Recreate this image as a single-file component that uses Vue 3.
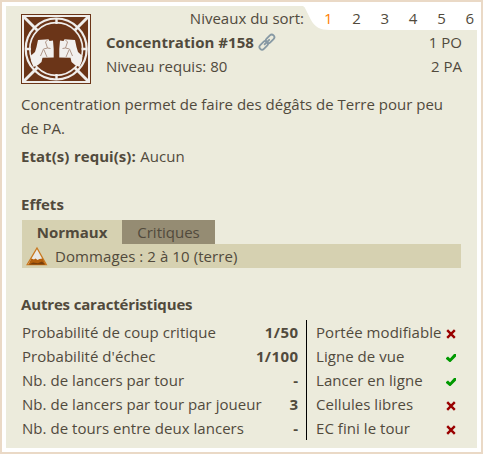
<script setup>
const levels = [1, 2, 3, 4, 5, 6]
const stats = [
  { label: 'Probabilité de coup critique', value: '1/50' },
  { label: "Probabilité d'échec", value: '1/100' },
  { label: 'Nb. de lancers par tour', value: '-' },
  { label: 'Nb. de lancers par tour par joueur', value: '3' },
  { label: 'Nb. de tours entre deux lancers', value: '-' },
]
const flags = [
  { label: 'Portée modifiable', on: false },
  { label: 'Ligne de vue', on: true },
  { label: 'Lancer en ligne', on: true },
  { label: 'Cellules libres', on: false },
  { label: 'EC fini le tour', on: false },
]
</script>

<template>
  <div class="card">
    <div class="panel">
      <header class="levels">
        <span class="levels-label">Niveaux du sort:</span>
        <nav class="level-list">
          <span v-for="n in levels" :key="n" class="level" :class="{ active: n === 1 }">{{ n }}</span>
        </nav>
      </header>

      <section class="head">
        <svg class="spell" width="70" height="70" viewBox="0 0 70 70">
          <rect width="70" height="70" fill="#6b3518" />
          <rect x="2" y="2" width="66" height="66" fill="none" stroke="#f0eeec" stroke-width="2" />
          <g fill="none" stroke="#f0eeec">
            <circle cx="35.200" cy="35" r="30.500" stroke-width="2.200" />
            <circle cx="35.200" cy="35" r="26.400" stroke-width="1.600" />
            <path d="M3 3L16.500 16.500M67 3L53.500 16.500M3 67L16.500 53.500M67 67L53.500 53.500" stroke-width="2.900" />
            <path d="M35.500 4V10M35.500 60V66M4 35H10M60.500 35H66" stroke-width="2.400" />
          </g>
          <g fill="#f2f0ee">
            <path d="M17 26L27.500 25.300L28.500 27L32 26.500L32.700 35V43.500L21.500 43.800L20.500 48L17 51L12.500 53L10 47L9.500 42L14 38L15.500 33Z" />
            <path d="M54 26L43.500 25.300L42.500 27L39 26.500L38.300 35V43.500L49.500 43.800L50.500 48L54 51L58.500 53L61 47L61.500 42L57 38L55.500 33Z" />
          </g>
          <g fill="none" stroke="#a88c7e" stroke-width="0.900">
            <path d="M26.500 26L24.500 28L26.500 34L29.500 34.500M26.500 34L22.500 35L19.500 42M23 36L26 43" />
            <path d="M44.500 26L46.500 28L44.500 34L41.500 34.500M44.500 34L48.500 35L51.500 42M48 36L45 43" />
          </g>
        </svg>
        <div class="identity">
          <div class="title"><b>Concentration #158</b>
            <svg class="link" width="18" height="18" viewBox="0 0 18 18">
              <g fill="none" stroke="#8799a4" stroke-width="1.800">
                <rect x="7.200" y="3.300" width="9.800" height="5.200" rx="2.600" transform="rotate(-45 12.100 5.900)" />
                <rect x="0.800" y="9.700" width="9.800" height="5.200" rx="2.600" transform="rotate(-45 5.700 12.300)" />
                <path d="M6.600 11.400L11.200 6.800" stroke-linecap="round" />
              </g>
            </svg>
          </div>
          <div class="required">Niveau requis: 80</div>
        </div>
        <div class="costs"><div>1 PO</div><div>2 PA</div></div>
      </section>

      <p class="description">Concentration permet de faire des dégâts de Terre pour peu<br>de PA.</p>
      <p class="states"><b>Etat(s) requi(s):</b> Aucun</p>

      <h2 class="effects-title">Effets</h2>
      <div class="tabs">
        <div class="tab selected">Normaux</div>
        <div class="tab other">Critiques</div>
      </div>
      <div class="effect">
        <svg width="22" height="20" viewBox="0 0 22 20">
          <path d="M11 2L20.300 18.700H1.200Z" fill="#e9e8e5" stroke="#c9781f" stroke-width="1.300" />
          <path d="M5.300 12.500L8 13.500L9.500 12.500L11.500 14L13.500 13L16.700 12.500L19.500 18.500H2.500Z" fill="#b45f0c" />
          <path d="M3 18.500L7 16.500L12 17.300L16 15.500L19 18.500Z" fill="#793f0b" />
        </svg>
        <span>Dommages : 2 à 10 (terre)</span>
      </div>

      <h2 class="other-title">Autres caractéristiques</h2>
      <div class="tables">
        <div class="stats">
          <div v-for="s in stats" :key="s.label" class="row"><span>{{ s.label }}</span><b>{{ s.value }}</b></div>
        </div>
        <div class="flags">
          <div v-for="f in flags" :key="f.label" class="row">
            <span>{{ f.label }}</span>
            <svg width="10" height="10" viewBox="0 0 10 10">
              <path v-if="f.on" d="M0 5L2 3.500L4 5.500L8 1H10V3.500L4.500 9H3.500L0 6Z" fill="#090" />
              <path v-else d="M1.200 1.200L8.800 8.800M8.800 1.200L1.200 8.800" stroke="#900" stroke-width="2.400" />
            </svg>
          </div>
        </div>
      </div>
    </div>
  </div>
</template>

<style>
body { margin: 0; }
</style>

<style scoped>
.card {
  box-sizing: border-box;
  width: 483px;
  height: 454px;
  border: 2px solid #ead9c6;
  background: #fff;
  padding: 4px;
  font: 15px/24px "Open Sans", "Noto Sans", sans-serif;
  color: #514a3c;
}
.panel { box-sizing: border-box; height: 442px; background: #ecebdc; padding: 0 15px; }
.levels { display: flex; height: 24px; margin-right: -15px; justify-content: flex-end; }
.levels-label { margin-right: -1px; }
.level-list {
  box-sizing: border-box;
  display: flex;
  justify-content: space-between;
  width: 174px;
  padding: 0 3px 0 21px;
  background: #fff;
  clip-path: path("M0 0H174V24H27C17 24 12 21 8 14L3 4Q2 1 0 0Z");
}
.level.active { color: #ff8000; }
.head { display: flex; height: 62px; }
.spell { flex: none; margin-top: -16px; }
.identity { flex: 1; margin-left: 15px; }
.title { display: flex; align-items: center; height: 24px; letter-spacing: 0.050px; }
.link { margin-left: 4px; }
.costs { text-align: right; }
p, h2 { margin: 0; font-size: 15px; line-height: 24px; }
.description { white-space: nowrap; }
.states { margin-top: 4px; letter-spacing: 0.040px; word-spacing: 0.600px; }
.effects-title { margin-top: 24px; }
.tabs { display: flex; margin: 4px 0 0 1px; }
.tab { box-sizing: border-box; height: 24px; text-align: center; }
.selected { width: 100px; background: #d6d1b1; font-weight: bold; }
.other { width: 93px; background: #958c73; }
.effect { display: flex; align-items: center; height: 24px; margin: 0 1px; padding-left: 4px; background: #d6d1b1; letter-spacing: 0.080px; }
.effect span { margin-left: 7px; }
.other-title { margin-top: 24px; letter-spacing: -0.160px; }
.tables { display: flex; height: 120px; margin: 4px 0 0 1px; white-space: nowrap; }
.stats { width: 276px; padding-right: 8px; border-right: 1px solid #000; letter-spacing: 0.040px; }
.stats b { letter-spacing: 0.400px; margin-right: -0.400px; }
.row { display: flex; justify-content: space-between; align-items: center; height: 24px; }
.flags { width: 140px; padding-left: 9px; letter-spacing: 0.050px; }
.flags svg { margin-top: 4px; }
</style>
